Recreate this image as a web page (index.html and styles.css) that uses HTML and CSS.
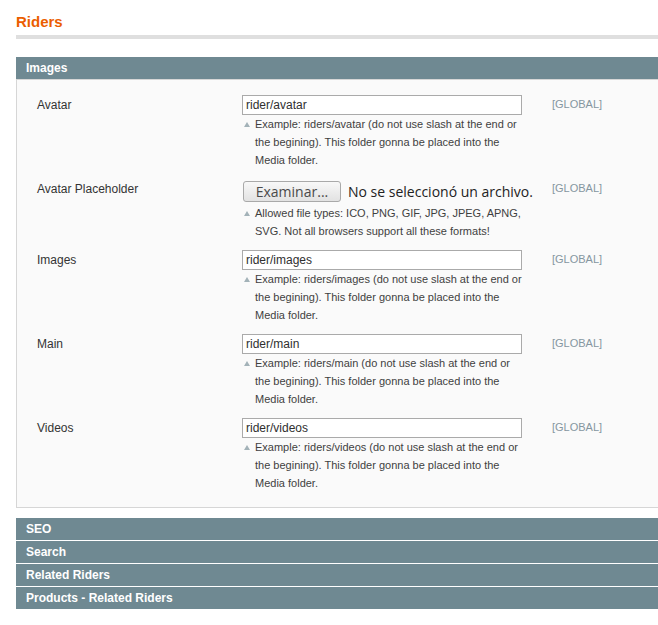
FILE: index.html
```html
<!DOCTYPE html>
<html lang="en">
<head>
<meta charset="utf-8">
<title>Riders</title>
<link rel="stylesheet" href="styles.css">
</head>
<body>
<div class="page">
  <div class="content-header"><h3>Riders</h3></div>

  <div class="section">
    <div class="section-head">Images</div>
    <div class="fieldset">
      <div class="row">
        <label class="label">Avatar</label>
        <div class="value">
          <input class="input-text" type="text" value="rider/avatar">
          <p class="note">Example: riders/avatar (do not use slash at the end or the begining). This folder gonna be placed into the Media folder.</p>
        </div>
        <div class="scope">[GLOBAL]</div>
      </div>
      <div class="row">
        <label class="label">Avatar Placeholder</label>
        <div class="value">
          <div class="file-input"><button class="file-btn" type="button">Examinar...</button><span class="file-name">No se seleccionó un archivo.</span></div>
          <p class="note">Allowed file types: ICO, PNG, GIF, JPG, JPEG, APNG, SVG. Not all browsers support all these formats!</p>
        </div>
        <div class="scope">[GLOBAL]</div>
      </div>
      <div class="row">
        <label class="label">Images</label>
        <div class="value">
          <input class="input-text" type="text" value="rider/images">
          <p class="note">Example: riders/images (do not use slash at the end or the begining). This folder gonna be placed into the Media folder.</p>
        </div>
        <div class="scope">[GLOBAL]</div>
      </div>
      <div class="row">
        <label class="label">Main</label>
        <div class="value">
          <input class="input-text" type="text" value="rider/main">
          <p class="note">Example: riders/main (do not use slash at the end or the begining). This folder gonna be placed into the Media folder.</p>
        </div>
        <div class="scope">[GLOBAL]</div>
      </div>
      <div class="row">
        <label class="label">Videos</label>
        <div class="value">
          <input class="input-text" type="text" value="rider/videos">
          <p class="note">Example: riders/videos (do not use slash at the end or the begining). This folder gonna be placed into the Media folder.</p>
        </div>
        <div class="scope">[GLOBAL]</div>
      </div>
    </div>
  </div>

  <div class="section-head collapsed">SEO</div>
  <div class="section-head collapsed">Search</div>
  <div class="section-head collapsed">Related Riders</div>
  <div class="section-head collapsed">Products - Related Riders</div>
</div>
</body>
</html>
```

FILE: styles.css
```css
html, body {
  margin: 0;
  padding: 0;
  background: #fff;
}

body {
  font-family: "Liberation Sans", Arial, Helvetica, sans-serif;
  font-size: 12px;
  color: #2f2f2f;
}

.page {
  padding: 13px 0 0 16px;
}

.content-header {
  border-bottom: 4px solid #dfdfdf;
  padding-bottom: 5px;
  margin-bottom: 18px;
}

.content-header h3 {
  margin: 0;
  font-size: 15px;
  font-weight: bold;
  line-height: 17px;
  color: #eb5e00;
}

.section {
  margin-bottom: 10px;
}

.section-head {
  height: 22px;
  line-height: 22px;
  padding-left: 10px;
  background: #6f8992;
  color: #fff;
  font-weight: bold;
  font-size: 12px;
}

.section-head.collapsed {
  margin-bottom: 1px;
}

.fieldset {
  background: #fafafa;
  border: 1px solid #d6d6d6;
  border-right: 0;
  padding: 10px 0 10px 20px;
}

.row {
  display: grid;
  grid-template-columns: 175px 280px auto;
  column-gap: 30px;
  padding: 5px 0;
}

.label {
  padding-top: 1px;
  font-size: 12px;
  line-height: 18px;
  color: #333;
}

.scope {
  font-size: 11px;
  line-height: 18px;
  color: #8596a0;
}

.input-text {
  display: block;
  box-sizing: border-box;
  width: 280px;
  height: 20px;
  margin: 0;
  padding: 0 3px;
  border: 1px solid #aaa;
  background: #fff;
  font-family: "Liberation Sans", Arial, Helvetica, sans-serif;
  font-size: 12px;
  color: #2f2f2f;
  outline: none;
}

.file-input {
  display: flex;
  align-items: center;
  height: 25px;
  gap: 7px;
  font-family: "Open Sans", "DejaVu Sans", sans-serif;
  font-size: 14px;
  color: #222;
}

.file-btn {
  flex-shrink: 0;
  box-sizing: border-box;
  width: 98px;
  height: 21px;
  margin: 0 0 0 1px;
  padding: 0;
  border: 1px solid #a9a9a9;
  border-radius: 3px;
  background: linear-gradient(#f8f8f8, #e2e2e2);
  font-family: "Open Sans", "DejaVu Sans", sans-serif;
  font-size: 14px;
  line-height: 19px;
  color: #4a4a4a;
}

.file-name {
  flex-shrink: 0;
  white-space: nowrap;
}

.note {
  position: relative;
  width: 271px;
  margin: 0;
  padding-left: 13px;
  font-size: 11px;
  line-height: 18px;
  color: #3f3f3f;
}

.note::before {
  content: "";
  position: absolute;
  left: 2px;
  top: 7px;
  width: 0;
  height: 0;
  border-left: 3px solid transparent;
  border-right: 3px solid transparent;
  border-bottom: 5px solid #a3b2b8;
}
```
